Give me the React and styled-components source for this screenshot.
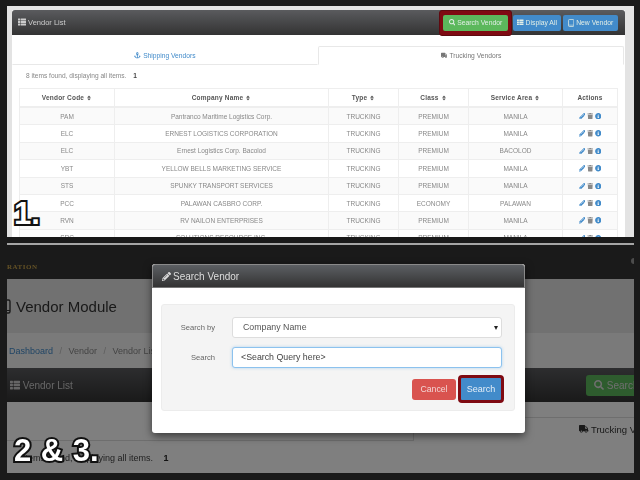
import React from "react";
import styled, { createGlobalStyle } from "styled-components";
import {
  FaAnchor,
  FaInfoCircle,
  FaPencilAlt,
  FaSearch,
  FaSort,
  FaThList,
  FaTrash,
  FaTruck,
} from "react-icons/fa";

const vendors = [
  ["PAM", "Pantranco Maritime Logistics Corp.", "TRUCKING", "PREMIUM", "MANILA"],
  ["ELC", "ERNEST LOGISTICS CORPORATION", "TRUCKING", "PREMIUM", "MANILA"],
  ["ELC", "Ernest Logistics Corp. Bacolod", "TRUCKING", "PREMIUM", "BACOLOD"],
  ["YBT", "YELLOW BELLS MARKETING SERVICE", "TRUCKING", "PREMIUM", "MANILA"],
  ["STS", "SPUNKY TRANSPORT SERVICES", "TRUCKING", "PREMIUM", "MANILA"],
  ["PCC", "PALAWAN CASBRO CORP.", "TRUCKING", "ECONOMY", "PALAWAN"],
  ["RVN", "RV NAILON ENTERPRISES", "TRUCKING", "PREMIUM", "MANILA"],
  ["SRC", "SOLUTIONS RESOURCE INC.", "TRUCKING", "PREMIUM", "MANILA"],
];

const columns = [
  ["Vendor Code", 95],
  ["Company Name", 214],
  ["Type", 70],
  ["Class", 70],
  ["Service Area", 94],
  ["Actions", 55],
];

function TabletIcon({ size }) {
  return (
    <svg width={size * 0.8} height={size} viewBox="0 0 12 15" fill="none" stroke="currentColor">
      <rect x="1" y="1" width="10" height="13" rx="1.5" strokeWidth="1.4" />
      <path d="M1 11.5h10" strokeWidth="1" />
    </svg>
  );
}

export default function App() {
  return (
    <>
      <GlobalStyle />
      <Page>
        <ListShot>
          <Soft>
            <Panel>
              <PanelHeader>
                <PanelTitle>
                  <FaThList /> Vendor List
                </PanelTitle>
                <Toolbar>
                  <Highlight>
                    <ToolButton $color="#5cb85c" $width={65}>
                      <FaSearch /> Search Vendor
                    </ToolButton>
                  </Highlight>
                  <ToolButton $color="#428bca" $width={48}>
                    <FaThList /> Display All
                  </ToolButton>
                  <ToolButton $color="#428bca" $width={55}>
                    <TabletIcon size={8} /> New Vendor
                  </ToolButton>
                </Toolbar>
              </PanelHeader>
              <Tabs>
                <Tab>
                  <FaAnchor /> Shipping Vendors
                </Tab>
                <Tab $active>
                  <FaTruck /> Trucking Vendors
                </Tab>
              </Tabs>
              <Summary>
                8 items found, displaying all items. <strong>1</strong>
              </Summary>
              <VendorTable>
                <colgroup>
                  {columns.map(([name, width]) => (
                    <col key={name} width={width} />
                  ))}
                </colgroup>
                <thead>
                  <tr>
                    {columns.map(([name]) => (
                      <th key={name}>
                        {name} {name !== "Actions" && <FaSort />}
                      </th>
                    ))}
                  </tr>
                </thead>
                <tbody>
                  {vendors.map((row, i) => (
                    <tr key={i}>
                      {row.map((cell, j) => (
                        <td key={j}>{cell}</td>
                      ))}
                      <td>
                        <Actions>
                          <FaPencilAlt color="#428bca" />
                          <FaTrash color="#888" />
                          <FaInfoCircle color="#428bca" />
                        </Actions>
                      </td>
                    </tr>
                  ))}
                </tbody>
              </VendorTable>
            </Panel>
          </Soft>
          <StepLabel $top={187}>1.</StepLabel>
        </ListShot>

        <Divider />

        <ModalShot>
          <Brand>
            RATION
            <UserDot />
          </Brand>
          <ModuleTitle>
            <TabletIcon size={15} />
            Vendor Module
          </ModuleTitle>
          <Breadcrumb>
            <a>Dashboard</a>
            <i>/</i>Vendor<i>/</i>Vendor List
          </Breadcrumb>
          <DimHeader>
            <span>
              <FaThList /> Vendor List
            </span>
            <DimSearch>
              <FaSearch /> Search Vendor
            </DimSearch>
          </DimHeader>
          <DimTabs>
            <DimTab />
            <DimTab $active>
              <FaTruck /> Trucking Vendors
            </DimTab>
          </DimTabs>
          <DimSummary>
            8 items found, displaying all items. <strong>1</strong>
          </DimSummary>
          <Backdrop />
          <Modal>
            <ModalHeader>
              <FaPencilAlt /> Search Vendor
            </ModalHeader>
            <ModalBody>
              <Well>
                <Field>
                  <FieldLabel>Search by</FieldLabel>
                  <SelectBox>
                    Company Name
                    <Caret />
                  </SelectBox>
                </Field>
                <Field>
                  <FieldLabel>Search</FieldLabel>
                  <QueryBox>&lt;Search Query here&gt;</QueryBox>
                </Field>
                <ModalActions>
                  <CancelButton>Cancel</CancelButton>
                  <SearchButton>Search</SearchButton>
                </ModalActions>
              </Well>
            </ModalBody>
          </Modal>
          <StepLabel $top={185}>2 &amp; 3.</StepLabel>
        </ModalShot>
      </Page>
    </>
  );
}

const GlobalStyle = createGlobalStyle`
  html, body {
    margin: 0;
    background: #1a1a1a;
    font-family: "Liberation Sans", Arial, sans-serif;
  }
`;

const Page = styled.div`
  width: 627px;
  height: 480px;
  padding: 6px 6px 0 7px;
  overflow: hidden;
`;

const ListShot = styled.div`
  position: relative;
  height: 231px;
  overflow: hidden;
  background: #e3e3e3;
`;

const Soft = styled.div`
  filter: blur(0.4px);
`;

const Panel = styled.div`
  margin: 4px 9px 0 5px;
  background: #fff;
`;

const PanelHeader = styled.div`
  display: flex;
  align-items: center;
  justify-content: space-between;
  height: 25px;
  padding: 0 7px 0 6px;
  border-radius: 3px 3px 0 0;
  background: linear-gradient(#5a5b5e, #333);
`;

const PanelTitle = styled.div`
  color: #ccc;
  font-size: 7.5px;
  svg {
    vertical-align: -1px;
    font-size: 8px;
  }
`;

const Toolbar = styled.div`
  display: flex;
  align-items: center;
  gap: 2px;
`;

const Highlight = styled.div`
  padding: 4px 3px;
  border: 1px solid #5e0a10;
  border-radius: 3px;
  background: #7f0a12;
  margin-right: -1px;
`;

const ToolButton = styled.div`
  display: flex;
  align-items: center;
  justify-content: center;
  gap: 2px;
  width: ${({ $width }) => $width}px;
  height: 16px;
  border-radius: 2px;
  background: ${({ $color }) => $color};
  color: #e2eee6;
  font-size: 6.8px;
  white-space: nowrap;
  svg {
    font-size: 6.5px;
  }
`;

const Tabs = styled.div`
  display: flex;
  margin-top: 11px;
  height: 19px;
`;

const Tab = styled.div`
  flex: 1;
  display: flex;
  align-items: center;
  justify-content: center;
  gap: 2px;
  font-size: 6.7px;
  color: ${({ $active }) => ($active ? "#777" : "#428bca")};
  border: 1px solid ${({ $active }) => ($active ? "#e8e8e8" : "transparent")};
  border-bottom-color: ${({ $active }) => ($active ? "#fff" : "#e8e8e8")};
  border-radius: 2px 2px 0 0;
  margin-right: ${({ $active }) => ($active ? "1px" : "0")};
`;

const Summary = styled.div`
  margin: 7px 0 0 14px;
  height: 16px;
  color: #888;
  font-size: 6.6px;
  strong {
    margin-left: 5px;
    color: #444;
  }
`;

const VendorTable = styled.table`
  table-layout: fixed;
  width: 598px;
  margin-left: 7px;
  border-collapse: collapse;
  font-size: 6.5px;
  color: #888;
  th,
  td {
    border: 1px solid #eee;
    padding: 0;
    height: 16.4px;
    text-align: center;
    font-weight: 400;
  }
  th {
    height: 17px;
    border-bottom-width: 2px;
    color: #555;
    font-weight: 700;
    letter-spacing: 0.2px;
  }
  th svg {
    font-size: 6px;
    vertical-align: -0.5px;
  }
  tbody tr:nth-child(odd) {
    background: #fafafa;
  }
`;

const Actions = styled.div`
  display: flex;
  align-items: center;
  justify-content: center;
  gap: 1.5px;
  font-size: 6.5px;
`;

const StepLabel = styled.div`
  position: absolute;
  left: 7px;
  top: ${({ $top }) => $top}px;
  color: #fff;
  font-family: "Liberation Sans", sans-serif;
  font-size: 31px;
  font-weight: 700;
  line-height: 42px;
  word-spacing: 1px;
  white-space: nowrap;
  -webkit-text-stroke: 4px #111;
  paint-order: stroke fill;
`;

const Divider = styled.div`
  height: 2px;
  margin-top: 6px;
  background: #a5a5a5;
`;

const ModalShot = styled.div`
  position: relative;
  height: 228px;
  overflow: hidden;
  background: #fff;
  color: #333;
  filter: blur(0.25px);
`;

const Brand = styled.div`
  position: relative;
  height: 34px;
  background: #343434;
  color: #c7a24a;
  font-family: "Liberation Serif", serif;
  font-size: 7px;
  font-weight: 700;
  line-height: 44px;
  letter-spacing: 0.5px;
`;

const UserDot = styled.span`
  position: absolute;
  right: 0;
  top: 13px;
  width: 3px;
  height: 6px;
  border-radius: 3px 0 0 3px;
  background: #999;
`;

const ModuleTitle = styled.div`
  display: flex;
  align-items: center;
  height: 54px;
  background: #e2e2e2;
  font-size: 15px;
  svg {
    margin-left: -8px;
    margin-right: 5px;
  }
`;

const Breadcrumb = styled.div`
  display: flex;
  align-items: center;
  height: 35px;
  padding-left: 2px;
  background: #f5f5f5;
  color: #888;
  font-size: 9px;
  a {
    color: #428bca;
  }
  i {
    font-style: normal;
    margin: 0 6.5px;
    color: #bbb;
  }
`;

const DimHeader = styled.div`
  display: flex;
  align-items: center;
  justify-content: space-between;
  height: 34px;
  padding-left: 3px;
  background: linear-gradient(#5a5b5e, #333);
  color: #ccc;
  font-size: 10px;
  span svg {
    vertical-align: -1px;
  }
`;

const DimSearch = styled.div`
  display: flex;
  align-items: center;
  gap: 3px;
  margin-right: -47px;
  padding: 0 8px;
  height: 21px;
  border-radius: 3px;
  background: #5cb85c;
  color: #ddd;
  font-size: 10px;
  white-space: nowrap;
`;

const DimTabs = styled.div`
  display: flex;
  height: 39px;
`;

const DimTab = styled.div`
  flex: none;
  box-sizing: border-box;
  width: 407px;
  padding-left: 165px;
  border-bottom: 1px solid #ddd;
  border-right: ${({ $active }) => ($active ? "none" : "1px solid #ddd")};
  margin-top: ${({ $active }) => ($active ? "15px" : "0")};
  border-top: ${({ $active }) => ($active ? "1px solid #ddd" : "none")};
  border-bottom-color: ${({ $active }) => ($active ? "#fff" : "#ddd")};
  font-size: 9.5px;
  line-height: 23px;
  white-space: nowrap;
`;

const DimSummary = styled.div`
  padding: 12px 0 0 9px;
  color: #444;
  font-size: 9px;
  strong {
    margin-left: 8px;
    color: #222;
  }
`;

const Backdrop = styled.div`
  position: absolute;
  inset: 0;
  background: rgba(0, 0, 0, 0.5);
`;

const Modal = styled.div`
  position: absolute;
  left: 145px;
  top: 19px;
  width: 373px;
  height: 169px;
  display: flex;
  flex-direction: column;
  overflow: hidden;
  border-radius: 3px;
  background: #fff;
  box-shadow: 0 3px 8px rgba(0, 0, 0, 0.55);
`;

const ModalHeader = styled.div`
  display: flex;
  align-items: center;
  gap: 2px;
  height: 24px;
  flex: none;
  box-sizing: border-box;
  padding-left: 9px;
  background: linear-gradient(#5c5f63, #333);
  border: 1px solid #8a8a8a;
  border-bottom: 1px solid #777;
  border-radius: 3px 3px 0 0;
  color: #ddd;
  font-size: 10px;
  svg {
    font-size: 9px;
  }
`;

const ModalBody = styled.div`
  flex: 1;
  padding: 16px 10px 22px 9px;
  display: flex;
`;

const Well = styled.div`
  flex: 1;
  box-sizing: border-box;
  padding: 12px 12px 0 0;
  border: 1px solid #ececec;
  border-radius: 3px;
  background: #f4f4f4;
`;

const Field = styled.div`
  display: grid;
  grid-template-columns: 53px 270px;
  column-gap: 17px;
  align-items: center;
  margin-bottom: 9px;
`;

const FieldLabel = styled.div`
  text-align: right;
  color: #666;
  font-size: 7.6px;
`;

const SelectBox = styled.div`
  position: relative;
  box-sizing: border-box;
  height: 21px;
  padding-left: 10px;
  border: 1px solid #ddd;
  border-radius: 3px;
  background: #fff;
  color: #555;
  font-size: 8.8px;
  line-height: 19px;
`;

const Caret = styled.span`
  position: absolute;
  right: 3px;
  top: 8px;
  border: 2.5px solid transparent;
  border-top: 4px solid #222;
  border-bottom: 0;
`;

const QueryBox = styled(SelectBox)`
  border-color: #8cc2ee;
  box-shadow: 0 0 3px rgba(102, 175, 233, 0.5);
  color: #444;
  padding-left: 8px;
`;

const ModalActions = styled.div`
  display: flex;
  align-items: center;
  justify-content: flex-end;
  gap: 2px;
  margin: -2px -2px 0 0;
`;

const CancelButton = styled.div`
  width: 44px;
  height: 21px;
  border-radius: 3px;
  background: #d9534f;
  color: #f3d6d5;
  font-size: 8.7px;
  line-height: 21px;
  text-align: center;
`;

const SearchButton = styled.div`
  box-sizing: border-box;
  width: 46px;
  height: 28px;
  border: 3px solid #7f0a12;
  border-radius: 4px;
  background: #428bca;
  color: #e4eef7;
  font-size: 9px;
  line-height: 22px;
  text-align: center;
`;
